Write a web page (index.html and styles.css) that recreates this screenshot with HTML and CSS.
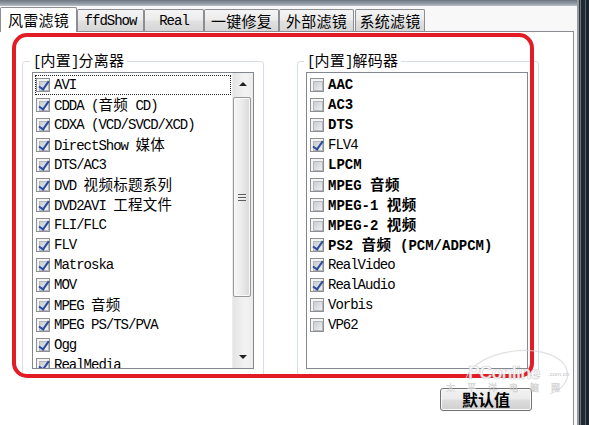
FILE: index.html
```html
<!DOCTYPE html>
<html>
<head>
<meta charset="utf-8">
<link rel="stylesheet" href="styles.css">
</head>
<body>
<div class="window">
  <div class="client">
    <div class="topband"></div>
    <div class="tabs">
      <div class="tab sel w77"><span class="zh">风雷滤镜</span></div>
      <div class="tab w67">ffdShow</div>
      <div class="tab w60">Real</div>
      <div class="tab w75"><span class="zh">一键修复</span></div>
      <div class="tab w75"><span class="zh">外部滤镜</span></div>
      <div class="tab w70 gap1"><span class="zh">系统滤镜</span></div>
    </div>
    <div class="panel">
      <div class="groups">
        <fieldset class="group left">
          <legend>[<span class="zh">内置</span>]<span class="zh">分离器</span></legend>
          <div class="listbox">
            <div class="items">
              <div class="row focus"><span class="cb on"></span><span>AVI</span></div>
              <div class="row"><span class="cb on"></span><span>CDDA (<span class="zh">音频</span> CD)</span></div>
              <div class="row"><span class="cb on"></span><span>CDXA (VCD/SVCD/XCD)</span></div>
              <div class="row"><span class="cb on"></span><span>DirectShow <span class="zh">媒体</span></span></div>
              <div class="row"><span class="cb on"></span><span>DTS/AC3</span></div>
              <div class="row"><span class="cb on"></span><span>DVD <span class="zh">视频标题系列</span></span></div>
              <div class="row"><span class="cb on"></span><span>DVD2AVI <span class="zh">工程文件</span></span></div>
              <div class="row"><span class="cb on"></span><span>FLI/FLC</span></div>
              <div class="row"><span class="cb on"></span><span>FLV</span></div>
              <div class="row"><span class="cb on"></span><span>Matroska</span></div>
              <div class="row"><span class="cb on"></span><span>MOV</span></div>
              <div class="row"><span class="cb on"></span><span>MPEG <span class="zh">音频</span></span></div>
              <div class="row"><span class="cb on"></span><span>MPEG PS/TS/PVA</span></div>
              <div class="row"><span class="cb on"></span><span>Ogg</span></div>
              <div class="row"><span class="cb on"></span><span>RealMedia</span></div>
            </div>
            <div class="scrollbar">
              <div class="sb-btn"><span class="arrow-up"></span></div>
              <div class="thumb"><span class="grip"></span></div>
              <div class="track"></div>
              <div class="sb-btn"><span class="arrow-down"></span></div>
            </div>
          </div>
        </fieldset>
        <fieldset class="group right">
          <legend>[<span class="zh">内置</span>]<span class="zh">解码器</span></legend>
          <div class="listbox">
            <div class="items">
              <div class="row b"><span class="cb"></span><span>AAC</span></div>
              <div class="row b"><span class="cb"></span><span>AC3</span></div>
              <div class="row b"><span class="cb"></span><span>DTS</span></div>
              <div class="row"><span class="cb on"></span><span>FLV4</span></div>
              <div class="row b"><span class="cb"></span><span>LPCM</span></div>
              <div class="row b"><span class="cb"></span><span>MPEG <span class="zh">音频</span></span></div>
              <div class="row b"><span class="cb"></span><span>MPEG-1 <span class="zh">视频</span></span></div>
              <div class="row b"><span class="cb"></span><span>MPEG-2 <span class="zh">视频</span></span></div>
              <div class="row b"><span class="cb on"></span><span>PS2 <span class="zh">音频</span> (PCM/ADPCM)</span></div>
              <div class="row"><span class="cb on"></span><span>RealVideo</span></div>
              <div class="row"><span class="cb on"></span><span>RealAudio</span></div>
              <div class="row"><span class="cb"></span><span>Vorbis</span></div>
              <div class="row"><span class="cb"></span><span>VP62</span></div>
            </div>
          </div>
        </fieldset>
      </div>
      <div class="buttons"><button class="btn">默认值</button></div>
      <div class="annot"></div>
    </div>
  </div>
  <div class="frame"></div>
  <div class="watermark">
    <svg class="wm-arc" width="150" height="70" viewBox="0 0 150 70"><path d="M26 40 C 36 12, 104 2, 124 26 C 132 38, 126 50, 110 56" fill="none" stroke="#d4d4d4" stroke-width="1.2" opacity="0.7"/></svg>
    <span class="wm-pc">PConline</span><span class="wm-com">.com.cn</span>
    <span class="wm-cn">太平洋电脑网</span>
  </div>
</div>
</body>
</html>
```
FILE: styles.css
```css
* { box-sizing: border-box; }
html, body { margin: 0; padding: 0; }
body {
  width: 589px;
  height: 425px;
  overflow: hidden;
  background: #fff;
  font-family: "Liberation Mono", "Noto Sans CJK SC", monospace;
  font-size: 14px;
  letter-spacing: -1px;
  color: #000;
}
.zh {
  font-family: "Noto Sans CJK SC", sans-serif;
  font-size: 14.5px;
  letter-spacing: 0.3px;
}
.window {
  position: relative;
  display: flex;
  width: 589px;
  height: 425px;
}
.client {
  width: 577px;
  display: flex;
  flex-direction: column;
  background: #f8f8f8;
  padding-right: 3px;
}
.topband {
  height: 6px;
  margin-right: -3px;
  background: linear-gradient(#6c7680, #9aa3ad 70%, #b8c0c8);
}
.tabs {
  height: 25px;
  display: flex;
  align-items: flex-end;
}
.tab {
  height: 22px;
  border: 1px solid #8c8e94;
  border-bottom: 0;
  border-radius: 2px 2px 0 0;
  background: linear-gradient(#f4f4f4, #ececec 45%, #e0e0e0 55%, #d6d6d6);
  display: flex;
  align-items: center;
  justify-content: center;
  line-height: 20px;
  white-space: nowrap;
}
.tab .zh { font-size: 15px; }
.tab.sel {
  height: 25px;
  margin-bottom: -1px;
  background: #fff;
  position: relative;
  z-index: 1;
}
.w77 { width: 77px; }
.w67 { width: 67px; }
.w60 { width: 60px; }
.w75 { width: 75px; }
.w70 { width: 70px; }
.gap1 { margin-left: 1px; }
.panel {
  flex: 1;
  position: relative;
  background: #fff;
  border-top: 1px solid #8c8e94;
  border-right: 1px solid #8c8e94;
  padding: 19px 34px 0 22px;
}
.groups {
  display: flex;
  gap: 33px;
}
.group {
  width: 242px;
  min-width: 0;
  margin: 0;
  border: 1px solid #d5dfe5;
  border-radius: 3px;
  padding: 1px 9px 6px 9px;
}
.group.right {
  padding-left: 8px;
  padding-right: 10px;
}
legend {
  padding: 0 3px;
  margin-left: -2px;
  line-height: 18px;
  white-space: nowrap;
}
legend .zh { font-size: 15px; line-height: 18px; }
.listbox {
  height: 297px;
  border: 1px solid #828790;
  background: #fff;
  display: flex;
}
.items {
  flex: 1;
  min-width: 0;
  padding: 2px 1px 0 2px;
  overflow: hidden;
}
.row {
  height: 20px;
  display: flex;
  align-items: center;
  gap: 4px;
  border: 1px solid transparent;
  white-space: nowrap;
  line-height: 20px;
}
.row.focus { border: 1px dotted #222; }
.row.b { font-weight: bold; letter-spacing: 0; }
.row.b .zh { letter-spacing: 0.5px; }
.cb {
  flex: none;
  position: relative;
  width: 14px;
  height: 14px;
  border: 1px solid #8e8f8f;
  background: #f4f4f4;
}
.cb::before {
  content: "";
  position: absolute;
  left: 2px;
  top: 2px;
  width: 8px;
  height: 8px;
  border: 1px solid #b4b8bd;
  background: linear-gradient(135deg, #c9ccd1, #eef0f2);
}
.cb.on::after {
  content: "";
  position: absolute;
  left: 4px;
  top: 0px;
  width: 4px;
  height: 9px;
  border: solid #2c4d9c;
  border-width: 0 2px 2px 0;
  transform: rotate(35deg);
}
.scrollbar {
  width: 21px;
  flex: none;
  display: flex;
  flex-direction: column;
  background: linear-gradient(to right, #e4e4e4, #f3f3f3 60%, #ececec);
  border-left: 1px solid #ededed;
}
.sb-btn {
  height: 22px;
  display: flex;
  align-items: center;
  justify-content: center;
}
.arrow-up {
  border-left: 4px solid transparent;
  border-right: 4px solid transparent;
  border-bottom: 4px solid #222;
}
.arrow-down {
  border-left: 4px solid transparent;
  border-right: 4px solid transparent;
  border-top: 4px solid #222;
}
.thumb {
  margin: 2px 2px 0 0;
  height: 200px;
  border: 1px solid #979797;
  border-radius: 2px;
  background: linear-gradient(to right, #f6f6f6, #ebebeb 50%, #d8d8d8);
  box-shadow: inset 0 0 0 1px #fafafa;
  display: flex;
  align-items: center;
  justify-content: center;
}
.grip {
  width: 8px;
  height: 7px;
  background: repeating-linear-gradient(#5e5e5e 0 1px, #f0f0f0 1px 2px, transparent 2px 3px);
}
.track { flex: 1; }
.buttons {
  display: flex;
  justify-content: flex-end;
  margin-top: 12px;
  padding-right: 7px;
}
.btn {
  width: 92px;
  height: 23px;
  padding: 0;
  border: 1px solid #707070;
  border-radius: 3px;
  background: linear-gradient(#f2f2f2, #ebebeb 48%, #dddddd 52%, #cfcfcf);
  box-shadow: inset 0 0 0 1px #fbfbfb;
  font-family: "Noto Sans CJK SC", sans-serif;
  font-size: 16px;
  font-weight: bold;
  letter-spacing: 0;
  line-height: 21px;
  color: #000;
}
.annot {
  position: absolute;
  left: 12px;
  top: 1px;
  width: 522px;
  height: 345px;
  border: 4px solid #e31b24;
  border-radius: 15px;
  pointer-events: none;
}
.frame {
  width: 12px;
  background: linear-gradient(to right, #9a9a9a 0 2px, #2e3943 2px 3px, #6d7883 3px 4px, #1f2a33 4px 8px, #55616c 8px 9px, #1a232b 9px 12px);
}
.watermark {
  position: absolute;
  left: 440px;
  top: 338px;
  width: 136px;
  height: 50px;
  pointer-events: none;
}
.wm-arc {
  position: absolute;
  left: 0;
  top: 0;
}
.wm-pc {
  position: absolute;
  left: 28px;
  top: 25px;
  font-family: "Liberation Sans", sans-serif;
  font-weight: bold;
  font-size: 18px;
  letter-spacing: -0.8px;
  line-height: 20px;
  color: rgba(255, 255, 255, 0.9);
  -webkit-text-stroke: 0.6px rgba(150, 150, 150, 0.5);
}
.wm-com {
  position: absolute;
  left: 108px;
  top: 33px;
  font-family: "Liberation Sans", sans-serif;
  font-size: 6px;
  line-height: 7px;
  letter-spacing: 0;
  color: rgba(160, 160, 160, 0.7);
}
.wm-cn {
  position: absolute;
  left: 6px;
  top: 45px;
  font-family: "Noto Sans CJK SC", sans-serif;
  font-size: 9px;
  letter-spacing: 12px;
  line-height: 9px;
  color: rgba(255, 255, 255, 0.85);
  -webkit-text-stroke: 0.5px rgba(150, 150, 150, 0.45);
}
```
